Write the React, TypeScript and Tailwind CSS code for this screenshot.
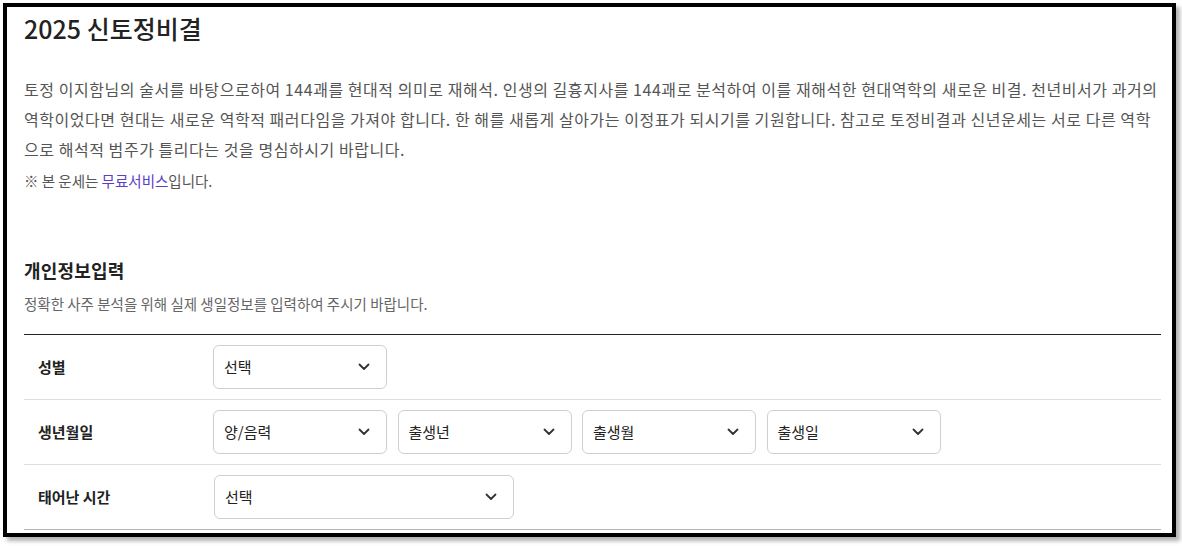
import React from "react";

const Chevron: React.FC = () => (
  <svg width="12" height="8" viewBox="0 0 12 8" fill="none" className="shrink-0">
    <polyline points="1.5,1.5 6,6 10.5,1.5" stroke="#333" strokeWidth="1.8" strokeLinecap="round" strokeLinejoin="round" />
  </svg>
);

const Select: React.FC<{ label: string; w: string }> = ({ label, w }) => (
  <div className={`${w} h-[44px] flex items-center justify-between pl-[10px] pr-[16px] border border-[#cfcfcf] rounded-[6px] bg-white text-[15px] text-[#222]`}>
    <span>{label}</span>
    <Chevron />
  </div>
);

const rows = [
  { label: "성별", selects: ["선택"], wide: false },
  { label: "생년월일", selects: ["양/음력", "출생년", "출생월", "출생일"], wide: false },
  { label: "태어난 시간", selects: ["선택"], wide: true },
];

const App: React.FC = () => {
  return (
    <div className="w-[1182px] h-[546px] bg-white pt-[3px] pl-[3px] font-['Noto_Sans_CJK_KR','Noto_Sans',sans-serif]">
      <div className="w-[1173px] h-[534px] border-4 border-black bg-white overflow-hidden shadow-[4px_4px_4px_rgba(0,0,0,0.3)]">
        <div className="pl-[17px] pr-[11px] pt-[5px]">
          <h1 className="text-[25px] leading-[32px] font-medium text-[#222]">2025 신토정비결</h1>

          <p className="mt-[30px] text-[16px] leading-[30px] text-[#555] tracking-[0.55px] whitespace-nowrap">
            토정 이지함님의 술서를 바탕으로하여 144괘를 현대적 의미로 재해석. 인생의 길흉지사를 144괘로 분석하여 이를 재해석한 현대역학의 새로운 비결. 천년비서가 과거의
            <br />
            역학이었다면 현대는 새로운 역학적 패러다임을 가져야 합니다. 한 해를 새롭게 살아가는 이정표가 되시기를 기원합니다. 참고로 토정비결과 신년운세는 서로 다른 역학
            <br />
            으로 해석적 범주가 틀리다는 것을 명심하시기 바랍니다.
          </p>
          <p className="mt-[7px] text-[14.5px] leading-[20px] text-[#555]">
            ※ 본 운세는 <span className="text-[#5a3ec8]">무료서비스</span>입니다.
          </p>

          <h2 className="mt-[67px] text-[18px] leading-[24px] font-bold text-[#222] tracking-[0.2px]">개인정보입력</h2>
          <p className="mt-[12px] text-[14.5px] leading-[20px] text-[#666]">
            정확한 사주 분석을 위해 실제 생일정보를 입력하여 주시기 바랍니다.
          </p>

          <div className="mt-[20px] border-t border-[#222]">
            {rows.map((row, i) => (
              <div
                key={i}
                className={`flex items-center h-[65px] border-b ${i === rows.length - 1 ? "border-[#b5b5b5]" : "border-[#dddddd]"}`}
              >
                <div className="w-[189px] shrink-0 pl-[14px] text-[15px] font-bold text-[#222]">{row.label}</div>
                <div className={`flex gap-[10.5px] ${row.wide ? "pl-px" : ""}`}>
                  {row.selects.map((s, j) => (
                    <Select key={j} label={s} w={row.wide ? "w-[300px]" : "w-[174px]"} />
                  ))}
                </div>
              </div>
            ))}
          </div>
        </div>
      </div>
    </div>
  );
};

export default App;
